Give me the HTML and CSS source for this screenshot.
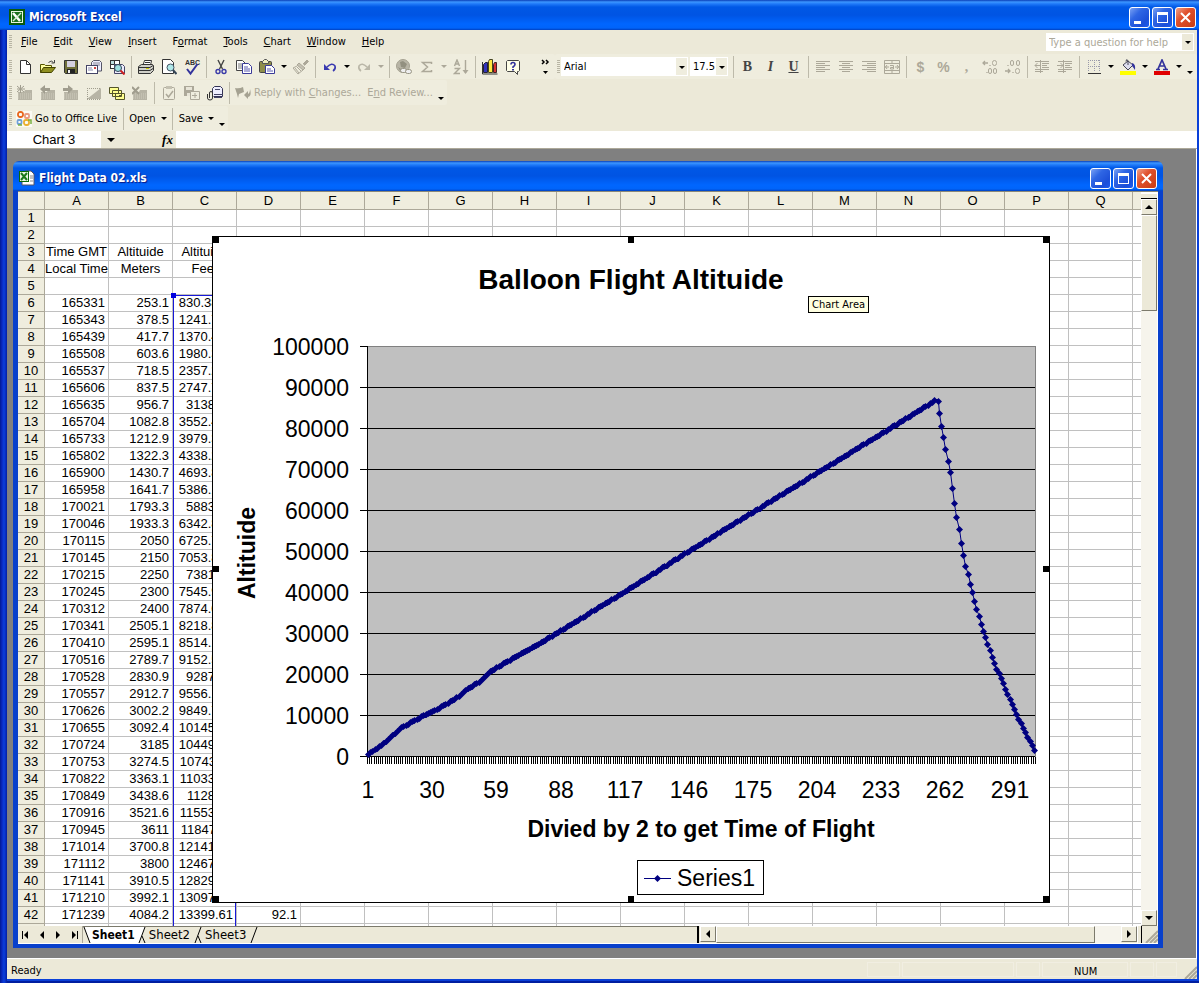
FILE: index.html
```html
<!DOCTYPE html>
<html lang="en">
<head>
<meta charset="utf-8">
<title>Microsoft Excel</title>
<link rel="stylesheet" href="styles.css">
</head>
<body>
<svg class="sprites" aria-hidden="true">
  <symbol id="excel" viewBox="0 0 16 16"><rect width="16" height="16" fill="#0a5a0a"/><rect x="2" y="2" width="12" height="12" fill="#e8f4e0"/><rect x="3" y="3" width="10" height="10" fill="#1c701c"/><path d="M4 4l7 8" stroke="#fff" stroke-width="2.500"/><path d="M12 4l-8 8" stroke="#d8ecd0" stroke-width="1.500"/></symbol>
  <symbol id="sheetfile" viewBox="0 0 16 16"><path d="M6 1h6l3 3v11H3v-3" fill="#fff" stroke="#556"/><path d="M11 6h3M11 8h3M11 11h3" stroke="#888"/><rect x="0" y="1" width="10" height="11" fill="#0a6a0a"/><rect x="1" y="2" width="8" height="9" fill="#e8f4e0"/><path d="M2 3l6 7M8 3l-6 7" stroke="#1a7a1a" stroke-width="2"/></symbol>
  <symbol id="new" viewBox="0 0 16 16"><path d="M3.500 1.500h6l4 4v9h-10z" fill="#fff" stroke="#333"/><path d="M9.500 1.500v4h4" fill="none" stroke="#333"/></symbol>
  <symbol id="open" viewBox="0 0 16 16"><path d="M.5 13.500v-8h4l1 1h6v2" fill="#ffffa0" stroke="#555500"/><path d="M.5 13.500l3-5h12l-4 5z" fill="#909020" stroke="#444400"/><path d="M8.500 3.500q3-3 5 0M14.500 1v3h-3" fill="none" stroke="#444"/></symbol>
  <symbol id="save" viewBox="0 0 16 16"><path d="M1.500 1.500h13v13h-12l-1-1z" fill="#70703a" stroke="#333"/><rect x="4" y="2" width="8" height="6" fill="#d4d0e0"/><rect x="4" y="10" width="8" height="4" fill="#222"/><rect x="5" y="11" width="2" height="3" fill="#eee"/></symbol>
  <symbol id="mail" viewBox="0 0 16 16"><path d="M5.500 7V3.500l2-2h6l2 2V12h-4" fill="#eef" stroke="#556"/><path d="M7 4h7M7 6h7" stroke="#889"/><rect x=".5" y="6.500" width="11" height="8" fill="#fff" stroke="#446"/><path d="M2 9h4M2 11h5" stroke="#88a"/><rect x="8" y="8" width="2" height="2" fill="#c44"/></symbol>
  <symbol id="find" viewBox="0 0 16 16"><rect x="1" y="1" width="10" height="9" fill="#333"/><rect x="2" y="2" width="3" height="3" fill="#bdd"/><rect x="6" y="2" width="4" height="3" fill="#fff"/><rect x="2" y="6" width="3" height="3" fill="#fff"/><path d="M5.500 5.500h8l2 2v7h-10z" fill="#eef" stroke="#446"/><circle cx="9" cy="9" r="3.500" fill="#9fe0e0" stroke="#345"/><path d="M11.500 11.500l4 4" stroke="#c22" stroke-width="2"/></symbol>
  <symbol id="print" viewBox="0 0 16 16"><path d="M5 6.500l1.500-5h7l-1 5" fill="#fff" stroke="#333"/><path d="M.5 7.500l3-2h11l1 1v5l-3 3h-12z" fill="#d0d0c8" stroke="#333"/><path d="M1 8.500h11l3-2M1 11.500h11l3-2M7 3.500h5" fill="none" stroke="#333"/><rect x="8" y="9" width="3" height="1" fill="#cc0"/></symbol>
  <symbol id="preview" viewBox="0 0 16 16"><path d="M1.500.500h8l3 3v11h-11z" fill="#fff" stroke="#333"/><circle cx="9.500" cy="8.500" r="3.500" fill="#b0e8e8" stroke="#456"/><path d="M12 11l3.500 4" stroke="#345" stroke-width="2"/></symbol>
  <symbol id="cut" viewBox="0 0 16 16"><path d="M5 1l4.500 9M11 1L6.500 10" stroke="#444" fill="none" stroke-width="1.400"/><circle cx="5" cy="12.500" r="2" fill="none" stroke="#3a3aa8" stroke-width="1.400"/><circle cx="11" cy="12.500" r="2" fill="none" stroke="#3a3aa8" stroke-width="1.400"/></symbol>
  <symbol id="copy" viewBox="0 0 16 16"><path d="M.5 1.500h6l3 3v7h-9z" fill="#fff" stroke="#444"/><path d="M2 5h4M2 7h5M2 9h5" stroke="#777"/><path d="M6.500 4.500h6l3 3v7h-9z" fill="#fff" stroke="#3a3a98"/><path d="M8 8h4M8 10h6M8 12h6" stroke="#5a5ab0"/></symbol>
  <symbol id="paste" viewBox="0 0 16 16"><rect x=".5" y="2.500" width="12" height="11" rx="1" fill="#8e8e4a" stroke="#444"/><path d="M3.500 4.500v-2l2-2h2l2 2v2z" fill="#eeeec0" stroke="#555"/><path d="M6.500 6.500h6l3 3v5h-9z" fill="#fff" stroke="#3a3a98"/><path d="M8 10h4M8 12h6" stroke="#5a5ab0"/></symbol>
  <symbol id="brush" viewBox="0 0 16 16"><path d="M10 5l4-4 1.500 1.500-4 4" fill="#aca899" stroke="#aca899"/><path d="M6 4l6 5-2 2-6-5z" fill="#c4c1b2" stroke="#aca899"/><path d="M4 7L0 9l5 6 5-4M2 9l4 5M4 8l4 4" fill="none" stroke="#aca899"/></symbol>
  <symbol id="undo" viewBox="0 0 16 16"><path d="M5 8q5-5 8-1 1 3-2 5" fill="none" stroke="#3a3ab0" stroke-width="1.600"/><path d="M2 5v6h6z" fill="#3a3ab0"/></symbol>
  <symbol id="redo" viewBox="0 0 16 16"><path d="M11 8Q6 3 3 7q-1 3 2 5" fill="none" stroke="#bab7a8" stroke-width="1.600"/><path d="M14 5v6H8z" fill="#bab7a8"/></symbol>
  <symbol id="link" viewBox="0 0 16 16"><circle cx="7" cy="7" r="6.500" fill="#b8b5a6" stroke="#a5a292"/><path d="M4 3l3-1 4 3-2 4-4-1zM2 8l3 2v3" fill="#929080"/><rect x="4.500" y="9.500" width="6" height="4" rx="2" fill="#eee" stroke="#999685"/><rect x="9.500" y="10.500" width="6" height="4" rx="2" fill="#eee" stroke="#999685"/></symbol>
  <symbol id="sigma" viewBox="0 0 16 16"><path d="M12.500 5V3.500h-9l5 4.500-5 4.500h9V11" fill="none" stroke="#aca899" stroke-width="1.500"/></symbol>
  <symbol id="sort" viewBox="0 0 16 16"><path d="M1.500 7l2.500-6 2.500 6M2 5h4M1.500 9.500h5l-5 5h5.500M12.500 1v13" fill="none" stroke="#aca899" stroke-width="1.400"/><path d="M9.500 11h6l-3 4z" fill="#aca899"/></symbol>
  <symbol id="chart" viewBox="0 0 16 16"><path d="M.5 3v12h15" fill="none" stroke="#333"/><path d="M1.500 5.500l2-2h2v10h-4z" fill="#3333bb" stroke="#223"/><path d="M6.500 2.500l1-2h3v13h-4z" fill="#ffe840" stroke="#442"/><path d="M11.500 5.500l1-2h2v10h-3z" fill="#d83030" stroke="#422"/></symbol>
  <symbol id="help" viewBox="0 0 16 16"><path d="M1.500 2.500l1-1h11l1 1v9l-1 1h-1v3l-3-3h-7l-1-1z" fill="#ffffe8" stroke="#444"/><path d="M6 5.500q0-2 2-2t2 2q0 1-2 2.500v1" fill="none" stroke="#33339c" stroke-width="1.600"/><rect x="7" y="10" width="2" height="1.500" fill="#33339c"/></symbol>
  <symbol id="left" viewBox="0 0 16 16"><path d="M1 2.500h14M1 4.500h9M1 6.500h14M1 8.500h9M1 10.500h14M1 12.500h9" stroke="#aca899"/></symbol>
  <symbol id="center" viewBox="0 0 16 16"><path d="M1 2.500h14M4 4.500h8M1 6.500h14M4 8.500h8M1 10.500h14M4 12.500h8" stroke="#aca899"/></symbol>
  <symbol id="right" viewBox="0 0 16 16"><path d="M1 2.500h14M6 4.500h9M1 6.500h14M6 8.500h9M1 10.500h14M6 12.500h9" stroke="#aca899"/></symbol>
  <symbol id="merge" viewBox="0 0 16 16"><path d="M.5 1.500h15v13H.500zM.500 4.500h15M.500 11.500h15M8 1v3M8 12v3M1 8h4M11 8h4M3 6L1.500 8 3 10M13 6l1.500 2L13 10" fill="none" stroke="#aca899"/><path d="M6 6.500h3.500v3.500H6.500V8.500h3" fill="none" stroke="#aca899"/></symbol>
  <symbol id="incdec" viewBox="0 0 16 16"><path d="M1 4h5M3 2L1 4l2 2M8 6v1M5 13v1" fill="none" stroke="#aca899" stroke-width="1.300"/><rect x="10.500" y="1.500" width="4" height="5" rx="2" fill="none" stroke="#aca899"/><rect x="6.500" y="9.500" width="3" height="5" rx="1.500" fill="none" stroke="#aca899"/><rect x="11.500" y="9.500" width="3" height="5" rx="1.500" fill="none" stroke="#aca899"/></symbol>
  <symbol id="decdec" viewBox="0 0 16 16"><path d="M0 12h5M3 10l2 2-2 2M3 6v1M8 13v1" fill="none" stroke="#aca899" stroke-width="1.300"/><rect x="5.500" y="1.500" width="3" height="5" rx="1.500" fill="none" stroke="#aca899"/><rect x="11.500" y="1.500" width="3" height="5" rx="1.500" fill="none" stroke="#aca899"/><rect x="10.500" y="9.500" width="4" height="5" rx="2" fill="none" stroke="#aca899"/></symbol>
  <symbol id="outdent" viewBox="0 0 16 16"><path d="M1 2.500h14M8 4.500h7M8 6.500h5M8 8.500h7M1 10.500h14M1 12.500h8M1 6.500h5M3.500 4L1 6.500 3.500 9M6.500 1v13" fill="none" stroke="#aca899"/></symbol>
  <symbol id="indent" viewBox="0 0 16 16"><path d="M1 2.500h14M8 4.500h7M8 6.500h5M8 8.500h7M1 10.500h14M1 12.500h8M0 6.500h6M3.500 4L6 6.500 3.500 9M6.500 1v13" fill="none" stroke="#aca899"/></symbol>
  <symbol id="borders" viewBox="0 0 16 16"><path d="M2 1.500h12M2 7.500h12M2.500 1v12M8.500 1v12M13.500 1v12" stroke="#99a" stroke-dasharray="1 1"/><path d="M2 14.500h13" stroke="#333"/></symbol>
  <symbol id="fill" viewBox="0 0 16 16"><path d="M3 6l5-4 5 4-5 5z" fill="#dde" stroke="#445"/><path d="M8 6V1.500q-2-2-2 1" fill="none" stroke="#445"/><path d="M12 4q4 1 3 7-2-3-3-4z" fill="#33339c"/><rect y="12" width="16" height="4" fill="#ff0"/></symbol>
  <symbol id="fontcolor" viewBox="0 0 16 16"><path d="M2 10.500h4M9 10.500h5M4 10l4-9 4 9M5.500 7h5" fill="none" stroke="#33339c" stroke-width="1.700"/><rect y="12" width="16" height="4" fill="#e00000"/></symbol>
  <symbol id="folder" viewBox="0 0 16 16"><path d="M1 7h6l1-2h7v10H1z" fill="#b7b4a5"/><path d="M1 9h14M1 11h14M1 13h14" stroke="#cfccbd" stroke-dasharray="1 1"/></symbol>
  <symbol id="comment1" viewBox="0 0 16 16"><use href="#folder"/><path d="M0 1l7 6M7 1L0 7M3.500 0v8M0 4h8" stroke="#a09d8e"/></symbol>
  <symbol id="comment2" viewBox="0 0 16 16"><use href="#folder"/><path d="M0 4l5-4v3h5v3H5v3z" fill="#a09d8e"/></symbol>
  <symbol id="comment3" viewBox="0 0 16 16"><use href="#folder"/><path d="M10 4L5 0v3H0v3h5v3z" fill="#a09d8e"/></symbol>
  <symbol id="showcom" viewBox="0 0 16 16"><path d="M1 14L15 3v11z" fill="#b7b4a5"/><path d="M1 3.500h13M1.500 3v11M1 14.500h14" stroke="#a09d8e" stroke-dasharray="1 1"/></symbol>
  <symbol id="showall" viewBox="0 0 16 16"><path d="M.5 2.500h9v6h-9zM3.500 5.500h9v6h-9zM6.500 8.500h9v6h-9z" fill="#ffff90" stroke="#55552a"/><rect x="10" y="10" width="2" height="2" fill="#55552a"/></symbol>
  <symbol id="delcom" viewBox="0 0 16 16"><use href="#folder"/><path d="M0 2l7 7M7 2L0 9" stroke="#a09d8e" stroke-width="2"/></symbol>
  <symbol id="task" viewBox="0 0 16 16"><rect x="2.500" y="2.500" width="11" height="12" rx="1" fill="none" stroke="#aca899"/><rect x="5" y="1" width="6" height="3" fill="#c4c1b2"/><path d="M5 9l2.500 3L12 6" fill="none" stroke="#aca899" stroke-width="1.500"/></symbol>
  <symbol id="update" viewBox="0 0 16 16"><path d="M0 1h10v10H0z" fill="#aca899"/><path d="M2 2h6v3H2zM3 8h4v3H3z" fill="#e8e5d8"/><path d="M6.500 6.500h9v8h-9z" fill="#efedde" stroke="#aca899"/><path d="M8 10.500h5M11 8v5" stroke="#aca899"/></symbol>
  <symbol id="attach" viewBox="0 0 16 16"><path d="M5.500 8V3.500l2-2h6l2 2v8h-9" fill="#eef" stroke="#335"/><path d="M8 4.500h5M7 9.500h9M7 12.500h8" stroke="#446"/><path d="M2.500 13V8q0-1.500 1.500-1.500T5.500 8v5q0 2-2.500 2T.500 13V9" fill="none" stroke="#333"/></symbol>
  <symbol id="reply" viewBox="0 0 16 16"><path d="M0 3q4 1 8-1l1 5-5 2-1 4-1-4zM9 10l4-4v3q2-1 2-5 2 7-2 8v2z" fill="#a5a292"/></symbol>
  <symbol id="office" viewBox="0 0 16 16"><rect width="16" height="16" fill="#fbfaf4"/><g fill="none" stroke-width="1.800"><rect x="2" y="1" width="5" height="5" rx="2" stroke="#e8661c"/><rect x="9" y="3" width="4" height="4" rx="1" stroke="#e89a80"/><rect x="1.500" y="9" width="4" height="4" rx="1" stroke="#70a0d8"/><rect x="8" y="9" width="5" height="5" rx="2" stroke="#eab030"/></g><path d="M12 9h3v4M2 14h4" fill="none" stroke="#7ab040" stroke-width="1.500"/></symbol>
  <symbol id="min" viewBox="0 0 19 19"><rect x="4" y="13" width="7" height="3" fill="#fff"/></symbol>
  <symbol id="max" viewBox="0 0 19 19"><path d="M4 4h11v11H4zM5 7v7h9V7z" fill="#fff" fill-rule="evenodd"/></symbol>
  <symbol id="close" viewBox="0 0 19 19"><path d="M5 5l9 9M14 5l-9 9" stroke="#fff" stroke-width="2"/></symbol>
  <symbol id="grip" viewBox="0 0 14 14"><path d="M2 14L14 2M6 14l8-8M10 14l4-4" stroke="#aca899" stroke-width="2"/></symbol>
</svg>

<div class="app">
  <header class="titlebar">
    <svg class="icon"><use href="#excel"/></svg>
    <h1>Microsoft Excel</h1>
    <div class="winbtns">
      <button aria-label="Minimize"><svg><use href="#min"/></svg></button>
      <button aria-label="Maximize"><svg><use href="#max"/></svg></button>
      <button class="x" aria-label="Close"><svg><use href="#close"/></svg></button>
    </div>
  </header>

  <div class="frame">
    <nav class="menubar">
      <span class="handle"></span>
      <button><u>F</u>ile</button><button><u>E</u>dit</button><button><u>V</u>iew</button><button><u>I</u>nsert</button><button>F<u>o</u>rmat</button><button><u>T</u>ools</button><button><u>C</u>hart</button><button><u>W</u>indow</button><button><u>H</u>elp</button>
      <div class="ask"><input type="text" aria-label="Help question" placeholder="Type a question for help"><button aria-label="Recent questions"><i class="dn"></i></button></div>
    </nav>

    <div class="toolrow">
      <div class="bar std">
        <span class="handle"></span>
        <button class="tb" aria-label="New"><svg class="icon"><use href="#new"/></svg></button>
        <button class="tb" aria-label="Open"><svg class="icon"><use href="#open"/></svg></button>
        <button class="tb" aria-label="Save"><svg class="icon"><use href="#save"/></svg></button>
        <button class="tb" aria-label="E-mail"><svg class="icon"><use href="#mail"/></svg></button>
        <button class="tb" aria-label="Search"><svg class="icon"><use href="#find"/></svg></button>
        <span class="sep"></span>
        <button class="tb" aria-label="Print"><svg class="icon"><use href="#print"/></svg></button>
        <button class="tb" aria-label="Print preview"><svg class="icon"><use href="#preview"/></svg></button>
        <button class="tb" aria-label="Spelling"><svg class="icon spell" viewBox="0 0 16 16"><text x="1" y="6">ABC</text><path d="M3 10l3.500 4.500L13.500 5" fill="none" stroke="#33339c" stroke-width="2"/></svg></button>
        <span class="sep"></span>
        <button class="tb" aria-label="Cut"><svg class="icon"><use href="#cut"/></svg></button>
        <button class="tb" aria-label="Copy"><svg class="icon"><use href="#copy"/></svg></button>
        <button class="tb" aria-label="Paste"><svg class="icon"><use href="#paste"/></svg></button>
        <button class="drop" aria-label="Paste options"><i class="dn"></i></button>
        <button class="tb" aria-label="Format painter"><svg class="icon"><use href="#brush"/></svg></button>
        <span class="sep"></span>
        <button class="tb" aria-label="Undo"><svg class="icon"><use href="#undo"/></svg></button>
        <button class="drop" aria-label="Undo list"><i class="dn"></i></button>
        <button class="tb" aria-label="Redo"><svg class="icon"><use href="#redo"/></svg></button>
        <button class="drop off" aria-label="Redo list"><i class="dn"></i></button>
        <span class="sep"></span>
        <button class="tb" aria-label="Hyperlink"><svg class="icon"><use href="#link"/></svg></button>
        <button class="tb" aria-label="AutoSum"><svg class="icon"><use href="#sigma"/></svg></button>
        <button class="drop off" aria-label="AutoSum options"><i class="dn"></i></button>
        <button class="tb" aria-label="Sort ascending"><svg class="icon"><use href="#sort"/></svg></button>
        <span class="sep"></span>
        <button class="tb" aria-label="Chart wizard"><svg class="icon"><use href="#chart"/></svg></button>
        <button class="tb" aria-label="Help"><svg class="icon"><use href="#help"/></svg></button>
        <button class="more" aria-label="More buttons"><svg viewBox="0 0 10 16"><path d="M1 1l2 2-2 2M5 1l2 2-2 2" fill="none" stroke="#000" stroke-width="1.500"/><path d="M2 12h5l-2.500 3z"/></svg></button>
      </div>
      <div class="bar fmt">
        <span class="handle"></span>
        <div class="combo font"><input type="text" aria-label="Font" value="Arial"><button aria-label="Font list"><i class="dn"></i></button></div>
        <div class="combo size"><input type="text" aria-label="Font size" value="17.5"><button aria-label="Size list"><i class="dn"></i></button></div>
        <span class="sep"></span>
        <button class="tb letter"><b>B</b></button>
        <button class="tb letter"><em>I</em></button>
        <button class="tb letter"><u>U</u></button>
        <span class="sep"></span>
        <button class="tb" aria-label="Align left"><svg class="icon"><use href="#left"/></svg></button>
        <button class="tb" aria-label="Center"><svg class="icon"><use href="#center"/></svg></button>
        <button class="tb" aria-label="Align right"><svg class="icon"><use href="#right"/></svg></button>
        <button class="tb" aria-label="Merge"><svg class="icon"><use href="#merge"/></svg></button>
        <span class="sep"></span>
        <button class="tb num">$</button>
        <button class="tb num">%</button>
        <button class="tb num comma">,</button>
        <button class="tb" aria-label="Increase decimal"><svg class="icon"><use href="#incdec"/></svg></button>
        <button class="tb" aria-label="Decrease decimal"><svg class="icon"><use href="#decdec"/></svg></button>
        <span class="sep"></span>
        <button class="tb" aria-label="Decrease indent"><svg class="icon"><use href="#outdent"/></svg></button>
        <button class="tb" aria-label="Increase indent"><svg class="icon"><use href="#indent"/></svg></button>
        <span class="sep"></span>
        <button class="tb" aria-label="Borders"><svg class="icon"><use href="#borders"/></svg></button>
        <button class="drop" aria-label="Border list"><i class="dn"></i></button>
        <button class="tb" aria-label="Fill color"><svg class="icon"><use href="#fill"/></svg></button>
        <button class="drop" aria-label="Fill list"><i class="dn"></i></button>
        <button class="tb" aria-label="Font color"><svg class="icon"><use href="#fontcolor"/></svg></button>
        <button class="drop" aria-label="Font color list"><i class="dn"></i></button>
        <button class="drop low" aria-label="Toolbar options"><i class="dn"></i></button>
      </div>
    </div>

    <div class="toolrow">
      <div class="bar">
        <span class="handle"></span>
        <button class="tb" aria-label="New comment"><svg class="icon"><use href="#comment1"/></svg></button>
        <button class="tb" aria-label="Previous comment"><svg class="icon"><use href="#comment2"/></svg></button>
        <button class="tb" aria-label="Next comment"><svg class="icon"><use href="#comment3"/></svg></button>
        <button class="tb" aria-label="Show comment"><svg class="icon"><use href="#showcom"/></svg></button>
        <button class="tb" aria-label="Show all comments"><svg class="icon"><use href="#showall"/></svg></button>
        <button class="tb" aria-label="Delete comment"><svg class="icon"><use href="#delcom"/></svg></button>
        <span class="sep"></span>
        <button class="tb" aria-label="Create task"><svg class="icon"><use href="#task"/></svg></button>
        <button class="tb" aria-label="Update file"><svg class="icon"><use href="#update"/></svg></button>
        <button class="tb" aria-label="Send attachment"><svg class="icon"><use href="#attach"/></svg></button>
        <span class="sep"></span>
        <button class="txt gray"><svg class="icon"><use href="#reply"/></svg><span>Reply with <u>C</u>hanges...</span></button>
        <button class="txt gray"><span>E<u>n</u>d Review...</span></button>
        <button class="drop low" aria-label="Toolbar options"><i class="dn"></i></button>
      </div>
    </div>

    <div class="toolrow last">
      <div class="bar">
        <span class="handle"></span>
        <button class="txt"><svg class="icon"><use href="#office"/></svg><span>Go to Office Live</span></button>
        <span class="sep"></span>
        <button class="txt">Open <i class="dn"></i></button>
        <span class="sep"></span>
        <button class="txt">Save <i class="dn"></i></button>
        <button class="drop low" aria-label="Toolbar options"><i class="dn"></i></button>
      </div>
    </div>

    <div class="formulabar">
      <input class="namebox" type="text" aria-label="Name box" value="Chart 3">
      <button class="namedrop" aria-label="Names"><i class="dn"></i></button>
      <button class="fx"><i>fx</i></button>
      <input class="formula" type="text" aria-label="Formula">
    </div>

    <main class="workspace">
      <section class="book">
        <header class="titlebar inner">
          <svg class="icon"><use href="#sheetfile"/></svg>
          <h2>Flight Data 02.xls</h2>
          <div class="winbtns">
            <button aria-label="Minimize workbook"><svg><use href="#min"/></svg></button>
            <button aria-label="Maximize workbook"><svg><use href="#max"/></svg></button>
            <button class="x" aria-label="Close workbook"><svg><use href="#close"/></svg></button>
          </div>
        </header>
        <div class="bookbody">
          <div class="upper">
            <div class="gridwrap">
              <table id="grid" class="grid"></table>
              <div class="range"></div>
              <svg id="plot" class="chartobj" viewBox="212 236 838 667" role="img" aria-label="Balloon Flight Altituide chart"></svg>
              <div class="tip">Chart Area</div>
            </div>
            <div class="vscroll">
              <span class="split"></span>
              <button class="sb" aria-label="Scroll up"><i class="up"></i></button>
              <span class="thumb"></span>
              <span class="track"></span>
              <button class="sb" aria-label="Scroll down"><i class="dn big"></i></button>
            </div>
          </div>
          <div class="lower">
            <div class="sheetnav">
              <button aria-label="First sheet"><svg viewBox="0 0 16 16"><path d="M4 4h1v8H4zM10 4v8L6 8z"/></svg></button>
              <button aria-label="Previous sheet"><svg viewBox="0 0 16 16"><path d="M10 4v8L6 8z"/></svg></button>
              <button aria-label="Next sheet"><svg viewBox="0 0 16 16"><path d="M6 4v8l4-4z"/></svg></button>
              <button aria-label="Last sheet"><svg viewBox="0 0 16 16"><path d="M6 4v8l4-4zM11 4h1v8h-1z"/></svg></button>
            </div>
            <div class="tabs">
              <svg class="slash" viewBox="0 0 9 16"><path d="M1 0h8v16H7z" fill="#fff"/><path d="M1 0l6 16" stroke="#000"/></svg>
              <button class="on">Sheet1</button>
              <svg class="slash" viewBox="0 0 9 16"><path d="M0 0h8L2 16H0z" fill="#fff"/><path d="M8 0L2 16M5 9l3 7" stroke="#000"/></svg>
              <button>Sheet2</button>
              <svg class="slash" viewBox="0 0 9 16"><path d="M8 0L2 16M5 9l3 7" stroke="#000"/></svg>
              <button>Sheet3</button>
              <svg class="slash" viewBox="0 0 9 16"><path d="M8 0L2 16" stroke="#000"/></svg>
            </div>
            <div class="hscroll">
              <button class="sb" aria-label="Scroll left"><i class="lf"></i></button>
              <span class="hthumb"></span>
              <span class="track"></span>
              <button class="sb" aria-label="Scroll right"><i class="rt"></i></button>
              <span class="hsplit"></span>
            </div>
            <div class="corner"><svg><use href="#grip"/></svg></div>
          </div>
        </div>
      </section>
    </main>

    <footer class="status">
      <span class="ready">Ready</span>
      <span class="cell w32"></span><span class="cell w112"></span><span class="cell w24"></span><span class="cell w88">NUM</span><span class="cell w24"></span><span class="cell w20"></span>
      <svg class="sizer"><use href="#grip"/></svg>
    </footer>
  </div>
</div>
<script src="app.js"></script>
</body>
</html>
```
FILE: styles.css
```css
* { box-sizing: border-box; }
body {
  margin: 0;
  font-family: "DejaVu Sans Condensed", "DejaVu Sans", sans-serif;
  font-size: 11px;
  color: #000;
}
button, input { font: inherit; color: inherit; margin: 0; padding: 0; border: 0; background: none; }
input { min-width: 0; outline: 0; }
.sprites { position: absolute; width: 0; height: 0; }
.icon { width: 16px; height: 16px; flex: none; }

.app {
  height: 100vh;
  display: flex;
  flex-direction: column;
  padding-bottom: 2px;
  background: linear-gradient(90deg, #001890 0, #0828c0 2px, #0a40dc 4px, #0628b8 6px, #001ea0 7px);
}
.titlebar {
  flex: none;
  height: 30px;
  display: flex;
  align-items: center;
  padding: 4px 3px 0 9px;
  background: linear-gradient(#0a3fb8 0, #3c96ff 2px, #1e78f8 4px, #0058e6 7px, #0054e3 15px, #0066ff 24px, #0064fa 28px, #0040c0 30px);
}
.titlebar h1, .titlebar h2 {
  flex: 1;
  margin: 0 0 0 4px;
  font-size: 12px;
  line-height: 16px;
  font-weight: bold;
  color: #fff;
  text-shadow: 1px 1px 1px #0a1883;
}
.inner { padding-left: 6px; padding-right: 6px; border-radius: 6px 6px 0 0; }
.winbtns { display: flex; gap: 2px; }
.winbtns button {
  width: 21px;
  height: 21px;
  border: 1px solid #fff;
  border-radius: 3px;
  background: linear-gradient(135deg, #7ba2f4 0, #2f66e4 35%, #1c4fd8 75%, #1c5cf0 100%);
}
.winbtns .x { background: linear-gradient(135deg, #f0a088 0, #e0502c 40%, #c83c14 100%); }
.winbtns svg { display: block; width: 19px; height: 19px; }

.frame {
  flex: 1;
  min-height: 0;
  margin-left: 7px;
  display: flex;
  flex-direction: column;
  background: #ece9d8;
  border: solid #0a40d8;
  border-width: 0 2px 2px 0;
}
.handle {
  flex: none;
  width: 3px;
  height: 14px;
  margin: 0 1px 0 2px;
  background: repeating-linear-gradient(#b8b5a4 0 1px, transparent 1px 2px);
}
.menubar { height: 24px; flex: none; display: flex; align-items: center; padding-right: 3px; }
.menubar > button { padding: 0 8px; line-height: 20px; }
.menubar u, .txt u { text-underline-offset: 1px; }
.ask { margin-left: auto; display: flex; width: 148px; height: 18px; background: #fff; border: 1px solid #fff; }
.ask input { flex: 1; padding-left: 2px; }
.ask input::placeholder { color: #aca899; opacity: 1; }
.ask button { width: 11px; background: #ece9d8; }
.dn { display: inline-block; border: solid transparent; border-width: 3px 3px 0; border-top-color: #000; vertical-align: middle; }
.dn.big { border-width: 4px 4px 0; }
.up { display: inline-block; border: 4px solid transparent; border-top: 0; border-bottom-color: #000; }
.lf { display: inline-block; border: 4px solid transparent; border-left: 0; border-right-color: #000; }
.rt { display: inline-block; border: 4px solid transparent; border-right: 0; border-left-color: #000; }

.toolrow { flex: none; height: 26px; display: flex; padding-bottom: 1px; }
.toolrow.last { height: 25px; padding: 0; }
.bar { display: flex; align-items: center; background: #efedde; border-radius: 2px; }
.tb { width: 23px; height: 23px; display: flex; align-items: center; justify-content: center; flex: none; }
.drop { width: 11px; height: 23px; display: flex; align-items: center; justify-content: center; flex: none; }
.drop.off .dn { border-top-color: #aca899; }
.drop.low { align-items: flex-end; padding-bottom: 4px; }
.sep { flex: none; width: 6px; height: 22px; display: flex; justify-content: center; }
.sep::before { content: ""; width: 1px; background: #bdbaaa; }
.std { width: 548px; }
.fmt { flex: 1; }
.spell { font: bold 7px "Liberation Sans", sans-serif; fill: #333; overflow: visible; }
.more { margin: 0 4px 0 auto; width: 10px; height: 16px; }
.more svg { display: block; width: 10px; height: 16px; }
.combo { display: flex; height: 19px; background: #fff; border: 1px solid #fff; margin-right: 2px; }
.combo input { flex: 1; width: 0; padding-left: 2px; }
.combo button { width: 11px; background: #efedde; }
.font { width: 127px; }
.size { width: 38px; }
.letter { font: bold 14px "Liberation Serif", serif; color: #444; }
.num { font: bold 14px "Liberation Sans", sans-serif; color: #aca899; }
.comma { font-family: "Liberation Serif", serif; }
.txt { display: flex; align-items: center; gap: 3px; padding: 0 3px; height: 23px; }
.txt .dn { margin-left: 2px; }
.gray { color: #aca899; }

.formulabar { flex: none; height: 18px; display: flex; align-items: stretch; border-bottom: 1px solid #aca899; }
.namebox { width: 94px; background: #fff; text-align: center; font: 13px "Liberation Sans", sans-serif; }
.namedrop { width: 20px; }
.namedrop .dn { border-width: 4px 4px 0; }
.fx { margin-left: 38px; width: 17px; font: bold 13px "Liberation Serif", serif; }
.formula { flex: 1; background: #fff; }

.workspace { flex: 1; min-height: 0; display: flex; background: #808080; padding: 12px 33px 10px 6px; border-right: 1px solid #fff; }
.book { flex: 1; min-width: 0; display: flex; flex-direction: column; }
.bookbody {
  flex: 1;
  min-height: 0;
  display: flex;
  flex-direction: column;
  border: solid #0840cc;
  border-width: 0 5px 4px;
  background: #ece9d8;
  box-shadow: inset 0 1px #8a8878;
  padding-top: 1px;
}
.upper { flex: 1; min-height: 0; display: flex; }
.gridwrap { position: relative; flex: 1; min-width: 0; overflow: hidden; background: #fff; }
.grid { table-layout: fixed; width: 1179px; border-spacing: 0; font: 13px/16px "Liberation Sans", sans-serif; }
.grid th, .grid td { height: 17px; padding: 0 3px; border: solid #c0c0c0; border-width: 0 1px 1px 0; overflow: hidden; white-space: nowrap; text-align: right; font-weight: normal; }
.grid th { padding: 0; text-align: center; background: #efedde; border-color: #aca899; }
.grid thead th { height: 18px; }
.grid .rowhead { width: 27px; }
.grid .mid { text-align: center; padding: 0; }
.range { position: absolute; left: 155px; top: 103px; bottom: 0; width: 63px; border: 1px solid #1818d8; border-bottom: 0; }
.range::before { content: ""; position: absolute; left: -3px; top: -3px; width: 5px; height: 5px; background: #0000e0; }
.chartobj { position: absolute; left: 194px; top: 44px; width: 838px; height: 667px; font-family: "Liberation Sans", sans-serif; font-size: 23px; }
.chartobj .title { font-size: 28px; font-weight: bold; }
.chartobj .axis { font-weight: bold; }
.chartobj .y { text-anchor: end; }
.chartobj .x, .chartobj .title, .chartobj .axis { text-anchor: middle; }
.tip { position: absolute; left: 790px; top: 104px; padding: 0 3px; line-height: 15px; background: #ffffe1; border: 1px solid #000; }

.vscroll { flex: none; width: 17px; display: flex; flex-direction: column; border-right: 1px solid #fff; }
.split { height: 7px; border-bottom: 1px solid #000; border-top: 2px solid #fff; }
.sb { flex: none; width: 16px; height: 16px; display: flex; align-items: center; justify-content: center; background: #ece9d8; border: 1px solid #fff; border-right-color: #7c7a6c; border-bottom-color: #7c7a6c; }
.thumb { height: 96px; background: #ece9d8; border: 1px solid #fff; border-right-color: #7c7a6c; border-bottom-color: #7c7a6c; }
.track { flex: 1; background: #f6f4ec; }
.lower { flex: none; height: 18px; display: flex; align-items: stretch; border-bottom: 1px solid #fff; }
.sheetnav { display: flex; width: 65px; border-right: 1px solid #aca899; }
.sheetnav button { width: 16px; }
.sheetnav svg { display: block; width: 16px; height: 16px; }
.tabs { flex: 1; display: flex; border-top: 1px solid #7c7a6c; }
.tabs button { line-height: 16px; font-size: 13px; padding: 0 3px; }
.tabs .on { background: #fff; font-weight: bold; font-size: 12px; padding: 0 2px 0 0; }
.slash { width: 9px; height: 16px; flex: none; }
.hscroll { display: flex; width: 445px; border-left: 2px solid #000; padding-left: 1px; }
.hthumb { width: 379px; background: #ece9d8; border: 1px solid #fff; border-right-color: #7c7a6c; border-bottom-color: #7c7a6c; }
.hsplit { width: 5px; border-right: 1px solid #000; border-left: 1px solid #fff; }
.corner { width: 16px; }
.corner svg { display: block; width: 14px; height: 14px; margin: 3px 0 0 2px; }

.status { flex: none; height: 21px; display: flex; align-items: center; gap: 2px; border-top: 1px solid #fff; }
.ready { flex: 1; padding: 3px 0 0 4px; }
.cell { height: 15px; line-height: 15px; padding-top: 1px; border: 1px solid #f1eee2; }
.w20 { width: 21px; }
.w24 { width: 24px; }
.w32 { width: 33px; }
.w88 { width: 86px; padding-left: 31px; }
.w112 { width: 112px; }
.sizer { width: 14px; height: 14px; align-self: flex-end; margin-left: 4px; }
```
FILE: app.js
```js
// Worksheet: time and altitude in meters, from row 6 on
const flight = [
  [165331, 253.1], [165343, 378.5], [165439, 417.7], [165508, 603.6], [165537, 718.5],
  [165606, 837.5], [165635, 956.7], [165704, 1082.8], [165733, 1212.9], [165802, 1322.3],
  [165900, 1430.7], [165958, 1641.7], [170021, 1793.3], [170046, 1933.3], [170115, 2050],
  [170145, 2150], [170215, 2250], [170245, 2300], [170312, 2400], [170341, 2505.1],
  [170410, 2595.1], [170516, 2789.7], [170528, 2830.9], [170557, 2912.7], [170626, 3002.2],
  [170655, 3092.4], [170724, 3185], [170753, 3274.5], [170822, 3363.1], [170849, 3438.6],
  [170916, 3521.6], [170945, 3611], [171014, 3700.8], [171112, 3800], [171141, 3910.5],
  [171210, 3992.1], [171239, 4084.2]
];
const letters = 'ABCDEFGHIJKLMNOPQ'.split('');
let html = '<thead><tr><th class="rowhead"></th>' + letters.map(l => `<th>${l}</th>`).join('') + '<th></th></tr></thead><tbody>';
for (let r = 1; r <= 43; r++) {
  let cells = [];
  let mid = false;
  if (r === 3) { cells = ['Time GMT', 'Altituide', 'Altituide']; mid = true; }
  if (r === 4) { cells = ['Local Time', 'Meters', 'Feet']; mid = true; }
  if (r >= 6 && r <= 42) {
    const [time, m] = flight[r - 6];
    cells = [time, m, r === 42 ? '13399.61' : Number((m * 3.28084).toPrecision(7))];
    if (r === 42) cells.push('92.1');
  }
  html += `<tr><th>${r < 43 ? r : ''}</th>`;
  for (let c = 0; c < 18; c++) html += `<td${mid ? ' class="mid"' : ''}>${cells[c] ?? ''}</td>`;
  html += '</tr>';
}
document.getElementById('grid').innerHTML = html + '</tbody>';

// Chart
const L = 367, R = 1035, T = 346, B = 756, N = 302;
const step = (R - L) / N;
const out = [];
out.push('<rect x="212.500" y="236.500" width="837" height="666" fill="#fff" stroke="#000"/>');
for (const [x, y] of [[213, 237], [628, 237], [1043, 237], [213, 566], [1043, 566], [213, 896], [628, 896], [1043, 896]])
  out.push(`<rect x="${x}" y="${y}" width="6" height="6"/>`);
out.push(`<rect x="${L + .5}" y="${T + .5}" width="${R - L}" height="${B - T}" fill="#c0c0c0" stroke="#808080"/>`);
for (let i = 0; i <= 10; i++) {
  const y = B - 41 * i + .5;
  out.push(`<path d="M${L - 7} ${y}H${i === 10 ? L : R}" stroke="#000"/>`);
  out.push(`<text class="y" x="349" y="${y + 8}">${i * 10000}</text>`);
}
out.push(`<path d="M${L + .5} ${T}V${B}" stroke="#000"/>`);
let ticks = '';
for (let i = 0; i <= N; i++) ticks += `M${Math.round(L + i * step) + .5} ${B + 1}v7`;
out.push(`<path d="${ticks}" stroke="#000"/>`);
for (let i = 1; i < N; i += 29) out.push(`<text class="x" x="${Math.round(L + (i - .5) * step)}" y="798">${i}</text>`);
out.push('<text class="title" x="631" y="289">Balloon Flight Altituide</text>');
out.push('<text class="axis" x="701" y="837">Divied by 2 to get Time of Flight</text>');
out.push('<text class="axis" transform="translate(255 553) rotate(-90)">Altituide</text>');

const knots = [[368, 754], [384, 743], [400, 728], [420, 717], [440, 707], [459, 696], [468, 688], [480, 681], [490, 671], [507, 661], [543, 641], [625, 591], [685, 553], [880, 434], [935, 400]];
const fall = [[173,184],[178,220],[184,257],[190,292],[196,328],[205,364],[211,397],[217,445],[223,490],[229,532],[238,568],[244,610],[250,646],[256,677],[265,703],[271,733],[277,757],[283,784],[289,808],[298,829],[304,853],[310,874],[316,892],[322,913],[331,931],[337,952],[343,970],[349,988],[357,1000],[364,1015],[370,1030],[376,1048],[382,1063],[391,1078],[397,1093],[403,1108],[409,1123],[415,1138],[424,1150],[430,1164],[436,1177],[442,1192],[449,1204],[457,1216],[463,1231]];
const pts = [];
for (let x = 368; x <= 935; x += step) {
  let k = 1;
  while (k < knots.length - 1 && knots[k][0] < x) k++;
  const [x0, y0] = knots[k - 1], [x1, y1] = knots[k];
  pts.push([Math.round(x), Math.round(y0 + (y1 - y0) * (x - x0) / (x1 - x0))]);
}
for (const [x, y] of fall) pts.push([Math.round(880 + x / 3), Math.round(340 + y / 3)]);
const diamond = ([x, y]) => `M${x - 3} ${y + .5}l3.500-3.500 3.500 3.500-3.500 3.500z`;
out.push(`<path d="M${pts.map(p => (p[0] + .5) + ' ' + (p[1] + .5)).join('L')}" fill="none" stroke="#000080"/>`);
out.push(`<path d="${pts.map(diamond).join('')}" fill="#000080"/>`);
out.push('<rect x="637.500" y="860.500" width="126" height="34" fill="#fff" stroke="#000"/>');
out.push(`<path d="M644 878.500h27" stroke="#000080"/><path d="${diamond([657, 878])}" fill="#000080"/>`);
out.push('<text x="677" y="886">Series1</text>');
document.getElementById('plot').innerHTML = out.join('');
```
